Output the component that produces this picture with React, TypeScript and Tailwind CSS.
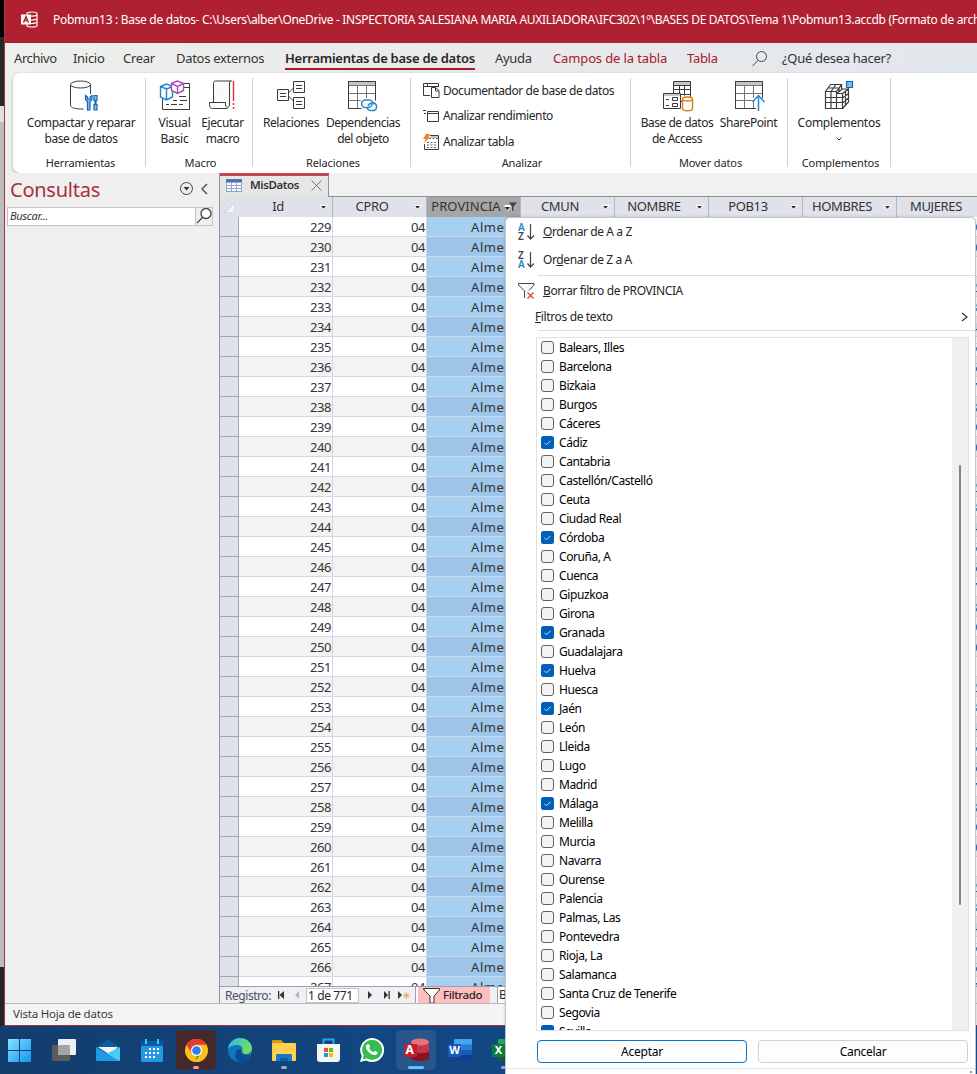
import type { ReactNode } from "react";

const provinces = [
  "Balears, Illes", "Barcelona", "Bizkaia", "Burgos", "Cáceres", "Cádiz", "Cantabria", "Castellón/Castelló",
  "Ceuta", "Ciudad Real", "Córdoba", "Coruña, A", "Cuenca", "Gipuzkoa", "Girona", "Granada", "Guadalajara",
  "Huelva", "Huesca", "Jaén", "León", "Lleida", "Lugo", "Madrid", "Málaga", "Melilla", "Murcia", "Navarra",
  "Ourense", "Palencia", "Palmas, Las", "Pontevedra", "Rioja, La", "Salamanca", "Santa Cruz de Tenerife",
  "Segovia", "Sevilla",
];
const selected = new Set(["Cádiz", "Córdoba", "Granada", "Huelva", "Jaén", "Málaga", "Sevilla"]);
const rowIds = Array.from({ length: 39 }, (_, i) => 229 + i);

function Group({ className, label, children }: { className: string; label: string; children: ReactNode }) {
  return (
    <div className={`flex h-[100px] shrink-0 flex-col pt-[5px] ${className}`}>
      <div className="flex h-[89px] flex-col border-r border-[#d0d0d0]">
        <div className="flex h-[77px] shrink-0 justify-center">{children}</div>
        <div className="pl-[3px] text-center text-[11px] leading-[16px] tracking-[-0.12px]">{label}</div>
      </div>
    </div>
  );
}

function BigButton({ className, icon, lines }: { className: string; icon: ReactNode; lines: string[] }) {
  return (
    <div className={`flex shrink-0 flex-col items-center whitespace-nowrap pt-[2px] ${className}`}>
      <div className="flex h-[35px] items-start justify-center">{icon}</div>
      {lines.map((l) => (
        <div key={l} className="text-[12px] leading-[16px]">{l}</div>
      ))}
    </div>
  );
}

const svg = { fill: "none", stroke: "#3b3b3b", strokeWidth: 1 } as const;

function DatabaseToolsIcon() {
  return (
    <svg width="30" height="32" viewBox="0 0 30 32" {...svg}>
      <path d="M1.500 5v20.500c0 2 5 3.500 10 3.500h3M21.500 5v9" />
      <ellipse cx="11.500" cy="4.500" rx="10" ry="3.500" fill="#fafafa" />
      <g stroke="#1268b3" fill="#83bdeb" strokeWidth="1.200">
        <path d="M16.500 15.500v4l2 2v8.500h2.500v-8.500l2-2v-4l-2 1.500v2h-2.500v-2z" />
        <path d="M25 15.500h3v5h-1v4h1v5.500h-3v-5.500h1v-4h-1z" />
      </g>
    </svg>
  );
}
function VisualBasicIcon() {
  return (
    <svg width="32" height="31" viewBox="0 0 32 31" {...svg}>
      <path d="M3.500 19v10.500h27v-26H24M24 7.500h6M3.500 20v1M7 24.500h3m2 0h6m2 0h4M14 20.500h4m3 0h7M20 16.500h7" />
      <path d="M1.500 6.500l6-2.500 6 2.500v10.500l-6 3-6-3zM1.500 6.500l6 2.500 6-2.500M7.500 9v11" fill="#fff" stroke="#2086c8" strokeWidth="1.400" />
      <path d="M12.500 3.500l6-2.500 6 2.500v7l-6 3-6-3zM12.500 3.500l6 3 6-3M18.500 6.500v7" fill="#fff" stroke="#af4bbb" strokeWidth="1.400" />
    </svg>
  );
}
function MacroIcon() {
  return (
    <svg width="28" height="30" viewBox="0 0 28 30" {...svg}>
      <path d="M5.500 22.500v-19c0-2 1-2.500 2-2.500h16c-2 0-2 1-2 3v21c0 3-4 3-4 0v-2.500h-16v2c0 3 1 4 3 4h15" fill="#fafafa" />
      <path d="M25.500 1v20M25.500 23v2M25.500 27v2" stroke="#e62d36" strokeWidth="1.400" />
    </svg>
  );
}
function RelationsIcon() {
  return (
    <svg width="30" height="30" viewBox="0 0 30 30" {...svg}>
      <path d="M12 13.500L18 7.500M12 15.500L18 21.500" />
      <path d="M1.500 9.500h11v11h-11zM17.500 1.500h11v11h-11zM17.500 17.500h11v11h-11zM4 13.500h6M4 16.500h6M20 5.500h6M20 8.500h6M20 21.500h6M20 24.500h6" fill="#fafafa" />
    </svg>
  );
}
function TableGrid() {
  return (
    <>
      <path d="M1.500 1.500h27v27h-27z" fill="#fff" />
      <path d="M2 2h26v3H2z" fill="#c8c6c4" stroke="none" />
      <path d="M1.500 5.500h27M1.500 13.500h27M1.500 20.500h27M10.500 5.500v23M19.500 5.500v23" stroke="#767676" />
      <path d="M1.500 1.500h27v27h-27z" />
    </>
  );
}
function DependencyIcon() {
  return (
    <svg width="32" height="32" viewBox="0 0 32 32" {...svg}>
      <TableGrid />
      <path d="M13 21l4-3h8l7 5v9H18l-5-5z" fill="#fff" stroke="none" />
      <g stroke="#2588ca" strokeWidth="1.400">
        <path d="M18 27.500a4 3.800 0 010-7.500h4a4 3.800 0 014 4.500" />
        <path d="M18 27.500h3a4 3.500 0 004-4" />
        <path d="M21 26a4.500 4.500 0 014-3h2a4 4 0 010 7.500h-4a4 3.800 0 01-3-3.500" />
      </g>
    </svg>
  );
}
function AccessDatabaseIcon() {
  return (
    <svg width="32" height="32" viewBox="0 0 32 32" {...svg}>
      <path d="M11.500 1.500h17v20h-17z" fill="#fff" />
      <path d="M12 2h16v3H12z" fill="#c8c6c4" stroke="none" />
      <path d="M11.500 5.500h17M11.500 9.500h17M11.500 14.500h17M17.500 5.500v10M22.500 5.500v10" />
      <path d="M1.500 13.500h17v15h-17z" fill="#fff" />
      <path d="M2 14h16v2H2z" fill="#c8c6c4" stroke="none" />
      <path d="M4 19.500h3M4 25.500h3M10.500 17.500h5v3h-5zM10.500 23.500h5v3h-5z" />
      <path d="M20.500 19v9.500c0 3 10 3 10 0V19" fill="#fff" stroke="#e07a14" strokeWidth="1.400" />
      <ellipse cx="25.500" cy="19" rx="5" ry="2" fill="#fff" stroke="#e07a14" strokeWidth="1.400" />
    </svg>
  );
}
function SharePointIcon() {
  return (
    <svg width="32" height="32" viewBox="0 0 32 32" {...svg}>
      <TableGrid />
      <path d="M17 20l7-6 7 6v12h-9V21z" fill="#fff" stroke="none" />
      <path d="M24.500 31V16M18.500 22l6-6.500 6 6.500" stroke="#2588ca" strokeWidth="1.500" />
    </svg>
  );
}
function AddinsIcon() {
  return (
    <svg width="30" height="30" viewBox="0 0 30 30" {...svg} strokeWidth="1.200">
      <path d="M1.500 11.500h11v17h-11zM12.500 13.500h6v15h-6zM1.500 17.500h17M1.500 22.500h17M7 11.500v17M1.500 11.500l5-7h11l-5 7M7 11.500l5-7M4 8h11M18.500 13.500l6-4.500v13l-6 6.500M12.500 13.500l6-4.500h6M18.500 18l6-4.500M18.500 23l6-5M21.500 11v14.500M17.500 4.500V9M15 8v4" />
      <path d="M22.500 1.500h6v6h-6z" fill="#7db9ed" stroke="#1268b3" />
    </svg>
  );
}

function AccessMark({ small }: { small?: boolean }) {
  return small ? (
    <svg width="17" height="17" viewBox="0 0 17 17" className="shrink-0">
      <path d="M6 2.500c0-2 10-2 10 0v12c0 2-10 2-10 0z" fill="none" stroke="#fff" strokeWidth="1.200" />
      <path d="M8 4.500c3 1 6 .6 8-.5M10 9c3 0 4-.5 6-1M10 12.500c3 0 4-.5 6-1" fill="none" stroke="#fff" strokeWidth="1.200" />
      <rect x="0" y="3.500" width="10" height="10" fill="#fff" />
      <path d="M2.500 11.500L5 5.500l2.500 6M3.500 9.500h3" fill="none" stroke="#af2131" strokeWidth="1.400" />
    </svg>
  ) : (
    <div className="relative h-[24px] w-[25px]">
      <svg width="25" height="24" viewBox="0 0 25 24">
        <path d="M7 4v16c0 4 18 4 18 0V4z" fill="#b01c2e" />
        <path d="M7 12v8c0 4 18 4 18 0v-8c0 3-18 3-18 0z" fill="#871520" />
        <path d="M7 5v8c0 3 18 3 18 0V5z" fill="#c43749" />
        <ellipse cx="16" cy="4" rx="9" ry="3.500" fill="#e7717e" />
        <rect x="0" y="6" width="13" height="13" rx="1" fill="#bd2133" />
      </svg>
      <span className="absolute left-[2px] top-[5px] text-[12px] font-bold leading-[13px] text-white">A</span>
    </div>
  );
}

function OfficeApp({ letter, kind }: { letter: string; kind: "word" | "excel" }) {
  const c = kind === "word" ? ["#42a5ee", "#2b7cd3", "#185abd", "#103f91"] : ["#21a366", "#33c481", "#107c41", "#185c37"];
  return (
    <div className="relative h-[22px] w-[24px]">
      <svg width="24" height="22" viewBox="0 0 24 22">
        <rect x="6" y="0" width="18" height="6" rx="1" fill={c[0]} />
        <path d="M6 5.500h18V11H6z" fill={c[1]} />
        <path d="M6 11h18v5.500H6z" fill={c[2]} />
        <path d="M6 16h18v5a1 1 0 01-1 1H7a1 1 0 01-1-1z" fill={c[3]} />
        <rect x="0" y="5" width="13" height="13" rx="1" fill={c[2]} />
      </svg>
      <span className="absolute left-0 top-[4px] w-[13px] text-center text-[11px] font-bold leading-[13px] text-white">{letter}</span>
    </div>
  );
}

function HeaderArrow() {
  return (
    <svg width="7" height="5" viewBox="0 0 7 5" className="overflow-visible">
      <path d="M-1 0h9L3.500 5z" fill="#fff" />
      <path d="M1 1h5L3.500 3.800z" fill="#2b2b2b" />
    </svg>
  );
}

function HeaderCell({ name, active, arrow = true }: { name: string; active?: boolean; arrow?: boolean }) {
  return (
    <div className={`flex h-[20px] w-[94px] shrink-0 items-center border-r border-[#b3b8c4] ${active ? "bg-[#a6a6a6]" : ""}`}>
      <span className={`pb-[2px] text-center text-[13px] leading-[18px] ${active ? "w-[78px] tracking-[0.05px]" : "w-[79px] pr-[1px] tracking-[-0.35px]"}`}>{name}</span>
      {active ? (
        <svg width="14" height="10" viewBox="0 0 14 10" className="-ml-[1px]">
          <path d="M0 3h8L4 9z" fill="#fff" />
          <path d="M1 5h5L3.500 8z" fill="#222" />
          <path d="M4 0h10L10 4.500V10l-2.500-1V4.500z" fill="#444" stroke="#ddd" strokeWidth=".6" />
        </svg>
      ) : (
        arrow && <div className="pl-[2px]"><HeaderArrow /></div>
      )}
    </div>
  );
}

function SortIcon({ reverse }: { reverse?: boolean }) {
  return (
    <div className="flex h-[18px] w-[17px]">
      <div className="flex w-[8px] flex-col text-[10px] font-semibold leading-[9px]">
        <span className={reverse ? "text-[#444]" : "text-[#2588ca]"}>{reverse ? "Z" : "A"}</span>
        <span className={reverse ? "text-[#2588ca]" : "text-[#444]"}>{reverse ? "A" : "Z"}</span>
      </div>
      <svg width="9" height="18" viewBox="0 0 9 18" fill="none" stroke="#444" strokeWidth="1.200">
        <path d="M4.500 1v15M1.500 12.500l3 3.500 3.500-3.500" />
      </svg>
    </div>
  );
}

function Ribbon() {
  return (
    <div className="flex h-[100px] w-full rounded-l-[7px] bg-white text-[#262626] shadow-[0_1px_3px_rgba(0,0,0,0.3)]">
      <Group className="w-[133px]" label="Herramientas">
        <BigButton className="w-[132px] pl-[4px] tracking-[-0.42px]" icon={<div className="pl-[5px]"><DatabaseToolsIcon /></div>} lines={["Compactar y reparar", "base de datos"]} />
      </Group>
      <Group className="w-[107px]" label="Macro">
        <BigButton className="w-[47px] pr-[2px] tracking-[-0.2px]" icon={<VisualBasicIcon />} lines={["Visual", "Basic"]} />
        <BigButton className="w-[47px] tracking-[-0.4px]" icon={<div className="pr-px"><MacroIcon /></div>} lines={["Ejecutar", "macro"]} />
      </Group>
      <Group className="w-[158px]" label="Relaciones">
        <BigButton className="w-[72px] pr-[5px] tracking-[-0.4px]" icon={<RelationsIcon />} lines={["Relaciones"]} />
        <BigButton className="w-[76px] pr-[9px] tracking-[-0.48px]" icon={<DependencyIcon />} lines={["Dependencias", "del objeto"]} />
      </Group>
      <Group className="w-[220px]" label="Analizar">
        <div className="flex w-[195px] flex-col whitespace-nowrap text-[12px] tracking-[-0.45px]">
          <div className="flex h-[25px] items-center gap-[3px]">
            <svg width="17" height="17" viewBox="0 0 17 17" {...svg} className="shrink-0">
              <path d="M7 13.500H.5V1.500h15V5M1 4.500h15M4.500 1v3" />
              <path d="M8.500 5.500h4l3.500 3v7H8.500zM12.500 5.500V9H16" fill="#fff" />
            </svg>
            Documentador de base de datos
          </div>
          <div className="flex h-[26px] items-center gap-[3px]">
            <svg width="17" height="16" viewBox="0 0 17 16" {...svg} className="shrink-0">
              <path d="M4.500 3.500h11v10h-11zM4.500 5.500h11M0 2.500h3M1 5.500h2" />
            </svg>
            <span className="tracking-[-0.4px]">Analizar rendimiento</span>
          </div>
          <div className="flex h-[26px] items-center gap-[3px]">
            <svg width="17" height="17" viewBox="0 0 17 17" {...svg} className="shrink-0">
              <path d="M7 1.500h8.500v14H1.500V10" />
              <path d="M8 2h7v2H7z" fill="#c8c6c4" stroke="none" />
              <path d="M6 4.500h9M4 8.500h10M4 11h10M4 13.500h10" stroke="#666" strokeDasharray="2 1.500" />
              <path d="M3 0h4L5.500 3H7L1 9l1.500-4H0z" fill="#ea8420" stroke="none" />
            </svg>
            <span className="tracking-[-0.4px]">Analizar tabla</span>
          </div>
        </div>
      </Group>
      <Group className="w-[157px]" label="Mover datos">
        <BigButton className="w-[78px] pl-[2px] tracking-[-0.5px]" icon={<div className="pl-[2px]"><AccessDatabaseIcon /></div>} lines={["Base de datos", "de Access"]} />
        <BigButton className="w-[66px] pl-[1px] tracking-[-0.42px]" icon={<div className="pl-[3px]"><SharePointIcon /></div>} lines={["SharePoint"]} />
      </Group>
      <Group className="w-[103px]" label="Complementos">
        <div className="flex flex-col items-center">
          <BigButton className="w-[95px] tracking-[-0.27px]" icon={<AddinsIcon />} lines={["Complementos"]} />
          <svg width="6" height="4" viewBox="0 0 6 4" fill="none" stroke="#333" className="mt-[6px]"><path d="M.5.500L3 3 5.500.500" /></svg>
        </div>
      </Group>
    </div>
  );
}

function FilterMenu() {
  return (
    <div className="absolute left-[505px] top-[217px] flex h-[870px] w-[471px] flex-col rounded-[5px] border border-[#c3c6cb] bg-white text-[12px] text-[#262626] shadow-[0_0_3px_rgba(0,0,0,0.2)]">
      <div className="flex h-[28px] items-center gap-[8px] pl-[12px] tracking-[-0.4px]"><SortIcon /><span><u>O</u>rdenar de A a Z</span></div>
      <div className="flex h-[28px] items-center gap-[8px] pl-[12px] tracking-[-0.4px]"><SortIcon reverse /><span>Or<u>d</u>enar de Z a A</span></div>
      <div className="ml-[32px] mt-px h-px bg-[#dcdcdc]" />
      <div className="flex h-[29px] items-center gap-[8px] pl-[12px] tracking-[-0.4px]">
        <svg width="17" height="18" viewBox="0 0 17 18" fill="none" stroke="#444">
          <path d="M6.500 16V9L.5 3V1.500h15.500V3l-5 5.500" fill="#fafafa" />
          <path d="M9.500 10.500l6 6M15.500 10.500l-6 6" stroke="#e04444" strokeWidth="1.400" />
        </svg>
        <span><u>B</u>orrar filtro de PROVINCIA</span>
      </div>
      <div className="flex h-[25px] items-center justify-between pb-[2px] pl-[29px] pr-[7px] tracking-[-0.37px]">
        <span><u>F</u>iltros de texto</span>
        <svg width="7" height="10" viewBox="0 0 7 10" fill="none" stroke="#333" strokeWidth="1.200"><path d="M1 1l5 4-5 4" /></svg>
      </div>
      <div className="ml-[32px] h-px bg-[#dcdcdc]" />
      <div className="ml-[30px] mt-[6px] flex h-[694px] w-[433px] overflow-hidden border border-[#dfe1e5]">
        <div className="flex flex-1 flex-col pl-[4px]">
          {provinces.map((p) => (
            <div key={p} className="flex h-[19px] shrink-0 items-center gap-[5px] text-[12px] leading-[19px] tracking-[-0.42px] text-black">
              {selected.has(p) ? (
                <svg width="13" height="13" viewBox="0 0 13 13"><rect width="13" height="13" rx="2.500" fill="#005fb8" /><path d="M3.500 6.800l2 2 4-4" fill="none" stroke="#cfe3f5" /></svg>
              ) : (
                <div className="h-[13px] w-[13px] rounded-[3px] border border-[#626262] bg-[#f3f3f3]" />
              )}
              {p}
            </div>
          ))}
        </div>
        <div className="flex w-[16px] justify-center bg-[#f0f0f0] pt-[127px]">
          <div className="h-[440px] w-[2px] rounded-full bg-[#858585]" />
        </div>
      </div>
      <div className="ml-[31px] mt-[9px] flex gap-[11px] text-black">
        <div className="flex h-[23px] w-[210px] items-center justify-center rounded-[4px] border border-[#0078d4] bg-[#fdfdfd] tracking-[-0.25px]">Aceptar</div>
        <div className="flex h-[23px] w-[210px] items-center justify-center rounded-[4px] border border-[#d0d0d0] bg-[#fdfdfd] tracking-[-0.3px]">Cancelar</div>
      </div>
      <div className="mt-[5px] h-px bg-[#d9e3ea]" />
      <div className="flex justify-end pr-[3px] pt-[2px]"><div className="h-[2px] w-[2px] bg-[#999]" /></div>
    </div>
  );
}

function RecordNavigator() {
  return (
    <div className="flex h-[17px] w-full items-center overflow-hidden border-t border-[#9ba0aa] bg-[#eef0f3] pl-[5px] text-[12px] leading-[16px] text-[#262626]">
      <span className="w-[52px] pt-px tracking-[-0.45px] text-[#4b5160]">Registro:</span>
      <svg width="8" height="8" viewBox="0 0 8 8" fill="#333"><path d="M1 0h1.300v8H1zM7 0v8L2.500 4z" /></svg>
      <svg width="8" height="8" viewBox="0 0 8 8" fill="#b5b5b5" className="ml-[8px]"><path d="M6 0v8L2 4z" /></svg>
      <div className="ml-[5px] h-[15px] w-[53px] whitespace-nowrap border border-[#c2c6cc] bg-white pl-[1px] leading-[14px] tracking-[-0.4px]">1 de 771</div>
      <svg width="8" height="8" viewBox="0 0 8 8" fill="#333" className="ml-[8px]"><path d="M1 0v8l4-4z" /></svg>
      <svg width="8" height="8" viewBox="0 0 8 8" fill="#333" className="ml-[8px]"><path d="M1 0v8l4-4zM5.500 0h1.300v8H5.500z" /></svg>
      <svg width="14" height="9" viewBox="0 0 14 9" className="ml-[6px]">
        <path d="M1 0v8l4-4z" fill="#333" />
        <path d="M9.500 1v7M6 4.500h7M7 2l5 5M12 2L7 7" stroke="#e3a545" strokeWidth=".8" />
      </svg>
      <div className="ml-[5px] flex h-full w-[74px] shrink-0 items-center border-l-2 border-white bg-[#ffbfc0] pl-[5px] shadow-[-1px_0_0_#9ba0aa]">
        <svg width="18" height="15" viewBox="0 0 18 15" fill="#fff" stroke="#333" className="shrink-0"><path d="M.5.500h16V2L11 8v7H7V8L1 2z" /></svg>
        <span className="pl-[2px] text-[11.500px] font-medium tracking-[-0.35px]">Filtrado</span>
      </div>
      <div className="ml-[7px] h-full border-l border-[#9ba0aa] bg-white pl-[1px]">Buscar</div>
    </div>
  );
}

function DataSheet() {
  return (
    <div className="flex w-[758px] shrink-0 flex-col overflow-hidden border-l border-[#8d939e] bg-[#f2f1ef]">
      <div className="flex h-[24px] shrink-0 items-end border-b border-[#8d939e]">
        <div className="-mb-px flex h-[24px] w-[109px] items-center border-r border-t-[3px] border-r-[#8d939e] border-t-[#c1484f] bg-[#e6e6e6] pb-[3px] pl-[6px]">
          <svg width="16" height="13" viewBox="0 0 16 13" className="shrink-0"><path fill="#8ba5d2" d="M0 0h16v13H0z" /><path fill="#fff" d="M1 4h4v2H1zM6 4h4v2H6zM11 4h4v2h-4zM1 7h4v2H1zM6 7h4v2H6zM11 7h4v2h-4zM1 10h4v2H1zM6 10h4v2H6zM11 10h4v2h-4z" /><path fill="#5474ad" d="M0 0h16v3H0z" /></svg>
          <span className="w-[69px] shrink-0 pl-[8px] text-[11.500px] font-semibold tracking-[-0.4px] text-[#333]">MisDatos</span>
          <svg width="11" height="11" viewBox="0 0 11 11" stroke="#777" className="shrink-0"><path d="M.5.500l10 10M10.500.500l-10 10" /></svg>
        </div>
      </div>
      <div className="flex h-[20px] shrink-0 bg-[#dfe2e8] text-[#333]">
        <div className="flex w-[19px] shrink-0 items-center justify-center"><svg width="11" height="11"><path d="M11 0v11H0z" fill="#eff4fb" stroke="#bccbe0" /></svg></div>
        <HeaderCell name="Id" />
        <HeaderCell name="CPRO" />
        <HeaderCell name="PROVINCIA" active />
        <HeaderCell name="CMUN" />
        <HeaderCell name="NOMBRE" />
        <HeaderCell name="POB13" />
        <HeaderCell name="HOMBRES" />
        <HeaderCell name="MUJERES" arrow={false} />
      </div>
      <div className="h-[769px] overflow-hidden bg-white">
        {rowIds.map((id, i) => (
          <div key={id} className={`flex h-[20px] text-right text-[13px] leading-[20px] tracking-[-0.4px] text-[#333] ${i % 2 ? "bg-[#f3f3f3]" : "bg-white"}`}>
            <div className="w-[19px] border-b border-r border-[#a0a5ae] bg-[#dfe2e8]" />
            <div className="w-[94px] border-b border-r border-[#d0d7e5] pr-[1px]">{id}</div>
            <div className="w-[94px] border-b border-r border-[#d0d7e5] pr-[1px]">04</div>
            <div className={`w-[94px] border-b border-[#d0d7e5] pl-[44px] text-left tracking-[0.6px] ${i % 2 ? "bg-[#9dc6ea]" : "bg-[#a6d0f2]"}`}>Almería</div>
            <div className="flex-1 border-b border-[#d0d7e5] text-[#345]">{id}</div>
          </div>
        ))}
      </div>
      <RecordNavigator />
    </div>
  );
}

function TaskSlot({ children, className = "", mark = "" }: { children: ReactNode; className?: string; mark?: string }) {
  return (
    <div className={`flex h-[40px] w-[40px] shrink-0 flex-col items-center rounded-[5px] ${className}`}>
      <div className="flex h-[36px] items-center pt-[4px]">{children}</div>
      <div className={`h-[3px] rounded-full ${mark}`} />
    </div>
  );
}

function Taskbar() {
  return (
    <div className="flex h-[48px] w-full gap-[4px] bg-gradient-to-r from-[#123e6d] to-[#14509c] pt-[4px]">
      <TaskSlot className="pr-px"><svg width="23" height="23" viewBox="0 0 23 23"><defs><linearGradient id="win" x2="1" y2="1"><stop stopColor="#8be0ff" /><stop offset="1" stopColor="#0b97f5" /></linearGradient></defs><path fill="url(#win)" d="M0 0h11v11H0zM12 0h11v11H12zM0 12h11v11H0zM12 12h11v11H12z" /></svg></TaskSlot>
      <TaskSlot><svg width="24" height="22" viewBox="0 0 24 22"><rect y="6" width="18" height="16" rx="1" fill="#5c5c5c" /><rect x="6" width="18" height="16" rx="1" fill="#f0f0f0" /><path d="M6 6h12v10H6z" fill="#a5a5a5" /></svg></TaskSlot>
      <TaskSlot><svg width="24" height="22" viewBox="0 0 24 22"><path d="M0 8L12 0l12 8v4H0z" fill="#0a5a9e" /><path d="M2 8h20l-8 8z" fill="#f2f2f2" /><path d="M24 8v13a1 1 0 01-1 1H1l11-8z" fill="#45cdf8" /><path d="M0 8v13l1 1h22z" fill="#1f9ae6" /></svg></TaskSlot>
      <TaskSlot><svg width="22" height="23" viewBox="0 0 22 23"><rect y="2" width="22" height="21" rx="1.500" fill="#2499e2" /><path d="M0 2h22v5H0z" fill="#085ca7" /><path d="M4 0h2v5H4zM16 0h2v5h-2z" fill="#4fc7f5" /><path stroke="#fff" strokeWidth="2" strokeDasharray="2 2" d="M8 10h10M4 14h14M4 18h10" /></svg></TaskSlot>
      <TaskSlot className="bg-[#452829]" mark="w-[6px] bg-[#f79a9f]">
        <svg width="23" height="23" viewBox="0 0 24 24"><circle cx="12" cy="12" r="12" fill="#fbc116" /><path d="M12 12L1.600 6A12 12 0 0110.500 24L17 14z" fill="#27a344" /><path d="M12 6h10.400A12 12 0 001.600 6L7 15l5-3z" fill="#e33b2e" /><circle cx="12" cy="12" r="5.800" fill="#fff" /><circle cx="12" cy="12" r="4.500" fill="#2f7de9" /></svg>
      </TaskSlot>
      <TaskSlot><svg width="24" height="24" viewBox="0 0 24 24"><defs><linearGradient id="edge" x2="1" y2=".5"><stop stopColor="#2ab8ed" /><stop offset="1" stopColor="#71e05a" /></linearGradient></defs><circle cx="12" cy="12" r="12" fill="#1175c4" /><path d="M0 11C1 4 6 0 12 0c7 0 12 5 12 10 0 4-3 6-6 6-4 0-5-1-4-3 2-4-2-6-5-6-4 0-8 2-9 4z" fill="url(#edge)" /><path d="M14 13c-2 4 3 7 8 5-2 4-6 6-10 6-4-1-6-6-4-10 1-3 4-4 6-1z" fill="#0b4b92" /><path d="M14.500 12c-2 4 4 5.500 8 4.500l-.8 1.800c-5 1.700-10-1-7.700-5.300z" fill="#174f8d" /></svg></TaskSlot>
      <TaskSlot mark="w-[6px] bg-[#9eaabf]"><svg width="24" height="22" viewBox="0 0 24 22"><path d="M0 2a1 1 0 011-1h8l3 3h11v10H0z" fill="#d9970c" /><rect y="4" width="24" height="18" rx="1" fill="#ffd14d" /><path d="M4 22v-5c0-2 1-2 2-2h12c1 0 2 0 2 2v5z" fill="#1477cb" /><path d="M8 19h8v3H8z" fill="#0c5aa4" /></svg></TaskSlot>
      <TaskSlot><svg width="23" height="24" viewBox="0 0 23 24"><path d="M6.500 8V1.500h10V8" fill="none" stroke="#28a6e9" strokeWidth="2" /><path d="M0 6h23v15a3 3 0 01-3 3H3a3 3 0 01-3-3z" fill="#f5f5f5" /><path fill="#f04e23" d="M7 10h4v4H7z" /><path fill="#7fba00" d="M12 10h4v4h-4z" /><path fill="#00a4ef" d="M7 15h4v4H7z" /><path fill="#ffb900" d="M12 15h4v4h-4z" /></svg></TaskSlot>
      <TaskSlot><svg width="24" height="24" viewBox="0 0 24 24"><path d="M0 24l1.700-6A12 12 0 116 22.400z" fill="#fff" /><path d="M2.500 21.500l1.200-4.200a10 10 0 113 3z" fill="#35bd50" /><path d="M7 6.500c1-1 2-.7 2.300.2l.8 2-1 1.500c1 2 2.500 3.200 4.500 4l1.300-1.500 2.600 1.300c.4 2-1.500 3.300-3.500 3C9.500 16 6 12 6 9c0-1 .4-2 1-2.500z" fill="#fff" /></svg></TaskSlot>
      <TaskSlot className="bg-[#29558c]" mark="w-[16px] bg-[#5bc6fb]"><AccessMark /></TaskSlot>
      <TaskSlot><OfficeApp letter="W" kind="word" /></TaskSlot>
      <TaskSlot mark="w-[6px] bg-[#9eaabf]"><OfficeApp letter="X" kind="excel" /></TaskSlot>
    </div>
  );
}

export default function App() {
  return (
    <div className="relative flex h-[1074px] w-[977px] flex-col overflow-hidden bg-[#efefef] font-['Noto_Sans','Open_Sans',sans-serif]">
      <div className="flex h-[1026px] shrink-0">
        <div className="flex w-[4px] shrink-0 flex-col">
          <div className="h-[37px] bg-black" /><div className="h-[69px] bg-[#282828]" /><div className="h-[16px] bg-[#e0e0e0]" /><div className="h-[845px] bg-[#bcbcbc]" /><div className="flex-1 bg-[#252525]" />
        </div>
        <div className="flex w-[973px] flex-col border-b border-l border-[#9e3540]">
          <div className="flex h-[43px] shrink-0 items-center overflow-hidden whitespace-nowrap bg-[#af2131] pb-[4px] pl-[16px] text-[12px] text-white">
            <AccessMark small />
            <span className="pl-[15px] tracking-[-0.31px]">Pobmun13 : Base de datos- C:\Users\alber\OneDrive - INSPECTORIA SALESIANA MARIA AUXILIADORA\IFC302\1º\BASES DE DATOS\Tema 1\Pobmun13.accdb (Formato de archivo)</span>
          </div>
          <div className="flex h-[30px] shrink-0 whitespace-nowrap bg-gradient-to-r from-[#edf0ec] via-[#e9e9ea] to-[#e3e8ed] pl-[9px] text-[13px] leading-[30px] tracking-[-0.3px] text-[#333]">
            <span className="w-[59px] tracking-[-0.4px]">Archivo</span>
            <span className="w-[50px]">Inicio</span>
            <span className="w-[53px]">Crear</span>
            <span className="w-[109px]">Datos externos</span>
            <div className="flex w-[210px]"><span className="h-[27px] w-[190px] border-b-2 border-[#a5192c] font-semibold tracking-[-0.27px] text-[#262626]">Herramientas de base de datos</span></div>
            <span className="w-[58px]">Ayuda</span>
            <span className="w-[134px] tracking-[-0.13px] text-[#a5192c]">Campos de la tabla</span>
            <span className="w-[65px] text-[#a5192c]">Tabla</span>
            <svg width="16" height="16" viewBox="0 0 16 16" fill="none" stroke="#444" className="mt-[8px]"><circle cx="9.500" cy="5.500" r="5" /><path d="M6 9.500L.5 15" /></svg>
            <span className="pl-[14px]">¿Qué desea hacer?</span>
          </div>
          <div className="shrink-0 bg-[#efefed] pl-[8px]"><Ribbon /></div>
          <div className="flex h-[830px] shrink-0">
            <div className="w-[214px] shrink-0 bg-[#efefef]">
              <div className="flex h-[34px] items-center pl-[5px] text-[#a83240]">
                <span className="w-[170px] text-[20px] tracking-[-0.25px]">Consultas</span>
                <svg width="13" height="13" viewBox="0 0 13 13" fill="none" stroke="#444" className="-mt-[4px]"><circle cx="6.500" cy="6.500" r="6" /><path d="M3.500 5h6l-3 3.500z" fill="#333" stroke="none" /></svg>
                <svg width="7" height="12" viewBox="0 0 7 12" fill="none" stroke="#555" strokeWidth="1.500" className="-mt-[3px] ml-[8px]"><path d="M6 1L1 6l5 5" /></svg>
              </div>
              <div className="ml-[2px] flex h-[19px] w-[206px] border border-[#c3c3c3] bg-white">
                <span className="flex-1 pl-[2px] text-[11px] italic leading-[16px] tracking-[-0.3px] text-[#333]">Buscar...</span>
                <div className="w-[17px] border-l border-[#c3c3c3] bg-[#efefef]"><svg width="16" height="16" viewBox="0 0 16 16" fill="none" stroke="#444" strokeWidth="1.300"><circle cx="10" cy="5.500" r="5" fill="#fff" /><path d="M6.500 9.500L1 15" /></svg></div>
              </div>
            </div>
            <DataSheet />
          </div>
          <div className="h-[22px] shrink-0 border-t border-[#b8b8b8] bg-[#f4f4f4] pl-[8px] text-[11.500px] leading-[20px] tracking-[-0.2px] text-[#3a3a3a]">Vista Hoja de datos</div>
        </div>
      </div>
      <Taskbar />
      <FilterMenu />
    </div>
  );
}
